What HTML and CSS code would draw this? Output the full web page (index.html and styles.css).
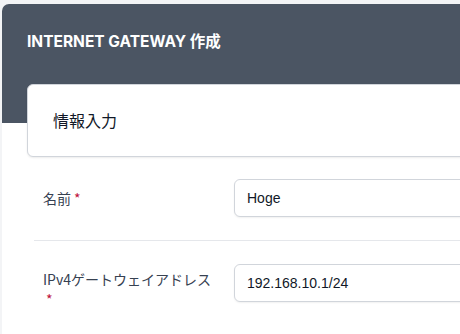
FILE: index.html
```html
<!DOCTYPE html>
<html lang="ja">
<head>
<meta charset="utf-8">
<title>INTERNET GATEWAY 作成</title>
<link rel="stylesheet" href="styles.css">
</head>
<body>
  <div class="panel">
    <div class="panel-top">
      <h1 class="title">INTERNET GATEWAY 作成</h1>
      <div class="card">情報入力</div>
    </div>
    <form class="form">
      <div class="row row-first">
        <label class="label label-single" for="name"><span class="label-text">名前</span><span class="req">*</span></label>
        <input class="input" id="name" type="text" value="Hoge">
      </div>
      <div class="row row-second">
        <label class="label label-wrap" for="ipv4"><span class="label-text">IPv4ゲートウェイアドレス</span><span class="req">*</span></label>
        <input class="input" id="ipv4" type="text" value="192.168.10.1/24">
      </div>
    </form>
  </div>
</body>
</html>
```
FILE: styles.css
```css
html, body {
  margin: 0;
  padding: 0;
}
body {
  background: #f3f4f6;
  overflow: hidden;
  font-family: "Noto Sans CJK JP", "Noto Sans", sans-serif;
}
.panel {
  margin: 4px 0 0 2px;
  width: 800px;
  height: 400px;
  background: #ffffff;
  border-top-left-radius: 7px;
  overflow: hidden;
}
.panel-top {
  background: linear-gradient(#4b5563 0, #4b5563 119px, #ffffff 119px);
  padding: 28px 0 0 25px;
}
.title {
  margin: 0;
  font-family: Inter, "Noto Sans CJK JP", sans-serif;
  font-size: 15.5px;
  line-height: 20px;
  font-weight: 700;
  color: #ffffff;
  letter-spacing: 0;
}
.card {
  margin-top: 32px;
  background: #ffffff;
  border: 1px solid #d1d5db;
  border-radius: 6px;
  box-shadow: 0 1px 2px rgba(0, 0, 0, 0.08);
  padding: 25px 25px;
  font-size: 16px;
  line-height: 21px;
  color: #111827;
}
.form {
  margin-left: 32px;
}
.row {
  display: grid;
  grid-template-columns: 168px 1fr;
  column-gap: 23px;
  align-items: start;
  padding-left: 9px;
  border-bottom: 1px solid #e5e7eb;
}
.row-first {
  padding-top: 22px;
  padding-bottom: 23px;
}
.row-second {
  padding-top: 23px;
  padding-bottom: 26px;
}
.label {
  font-size: 14px;
  line-height: 20px;
  color: #374151;
}
.label-text {
  white-space: nowrap;
}
.label-single {
  padding-top: 9px;
}
.label-wrap {
  padding-top: 5px;
}
.req {
  color: #be123c;
  margin-left: 3px;
}
.input {
  box-sizing: border-box;
  width: 100%;
  height: 38px;
  margin: 0;
  padding: 0 12px;
  border: 1px solid #d1d5db;
  border-radius: 6px;
  box-shadow: 0 1px 2px rgba(0, 0, 0, 0.06);
  font-family: "Liberation Sans", Arial, sans-serif;
  font-size: 14px;
  color: #111827;
  background: #ffffff;
  outline: none;
}
```
